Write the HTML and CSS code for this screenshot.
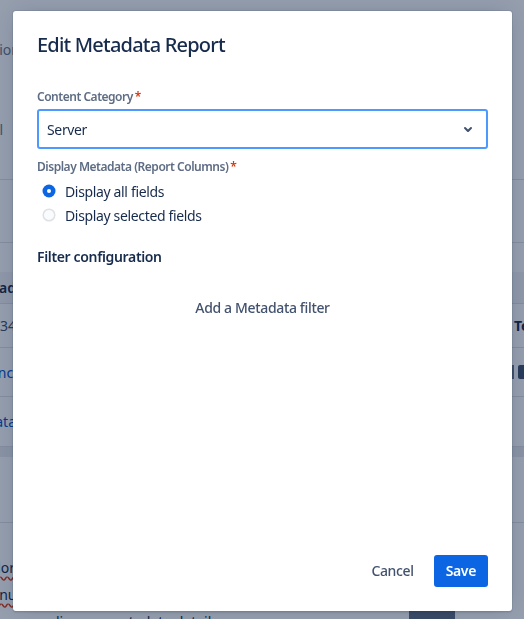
FILE: index.html
```html
<!DOCTYPE html>
<html lang="en">
<head>
    <meta charset="UTF-8">
    <meta name="viewport" content="width=device-width, initial-scale=1.0">
    <title>Edit Metadata Report</title>
    <link rel="stylesheet" href="styles.css">
</head>
<body>
    <div class="page">
        <div class="page-intro">
            <p class="intro-title">Report description</p>
            <p class="intro-meta">Detail</p>
        </div>
        <div class="toolbar"></div>
        <div class="grid">
            <div class="grid-row grid-head">
                <span class="cell cell-a">Upload</span>
                <span class="cell cell-b"></span>
                <span class="cell cell-c"></span>
            </div>
            <div class="grid-row row-1">
                <span class="cell cell-a muted">1234</span>
                <span class="cell cell-b"></span>
                <span class="cell cell-c strong">Template</span>
            </div>
            <div class="grid-row row-2">
                <span class="cell cell-a link cell-wide">Finance</span>
                <span class="cell cell-b"></span>
                <span class="cell cell-c"><span class="pipe"></span><span class="chip"></span></span>
            </div>
            <div class="grid-row row-3">
                <span class="cell cell-a link">Metadata</span>
                <span class="cell cell-b"></span>
                <span class="cell cell-c"></span>
            </div>
        </div>
        <div class="band"></div>
        <div class="notes">
            <p class="note-line"><span class="typo">Vendor</span></p>
            <p class="note-line note-second"><span class="typo">Annual</span></p>
            <div class="note-last">
                <span>lineage metadata details</span>
                <span class="handle"></span>
            </div>
        </div>
    </div>

    <div class="blanket">
        <div class="modal">
            <div class="modal-header">
                <h1>Edit Metadata Report</h1>
            </div>

            <div class="modal-body">
                <label class="field-label">Content Category<span class="required">*</span></label>
                <div class="select">
                    <span class="select-value">Server</span>
                    <svg class="select-icon" width="24" height="24" viewBox="0 0 24 24">
                        <path d="M8.292 10.293a1.009 1.009 0 000 1.419l2.939 2.965c.218.215.5.322.779.322s.556-.107.769-.322l2.93-2.955a1.01 1.01 0 000-1.419.987.987 0 00-1.406 0l-2.298 2.317-2.307-2.327a.99.99 0 00-1.406 0z" fill="currentColor" fill-rule="evenodd"/>
                    </svg>
                </div>

                <label class="field-label">Display Metadata (Report Columns)<span class="required">*</span></label>
                <div class="radio-group">
                    <div class="radio">
                        <svg width="24" height="24" viewBox="0 0 24 24">
                            <circle cx="12" cy="12" r="6.5" fill="#0c66e4"/>
                            <circle cx="12" cy="12" r="2" fill="#ffffff"/>
                        </svg>
                        <span>Display all fields</span>
                    </div>
                    <div class="radio">
                        <svg width="24" height="24" viewBox="0 0 24 24">
                            <circle cx="12" cy="12" r="5.8" fill="#fafbfc" stroke="#dfe1e6" stroke-width="1.5"/>
                        </svg>
                        <span>Display selected fields</span>
                    </div>
                </div>

                <h2 class="section-title">Filter configuration</h2>
                <div class="add-filter">
                    <button class="btn btn-subtle">Add a Metadata filter</button>
                </div>
            </div>

            <div class="modal-footer">
                <button class="btn btn-subtle">Cancel</button>
                <button class="btn btn-primary">Save</button>
            </div>
        </div>
    </div>
</body>
</html>
```

FILE: styles.css
```css
* {
    box-sizing: border-box;
}
html, body {
    height: 100%;
}
body {
    margin: 0;
    overflow: hidden;
    font-family: "Noto Sans", "Liberation Sans", sans-serif;
    font-size: 14px;
    color: #172b4d;
    background-color: #ffffff;
}

/* page behind the dialog */
.page {
    width: 620px;
}
.page-intro {
    height: 180px;
    padding-top: 40px;
    border-bottom: 1px solid #dfe1e6;
}
.intro-title,
.intro-meta {
    margin: 0;
    width: 200px;
    margin-left: -180px;
    text-align: right;
    line-height: 20px;
    color: #6b778c;
}
.intro-meta {
    margin-top: 60px;
    margin-left: -197px;
}
.toolbar {
    height: 63px;
    border-bottom: 1px solid #dfe1e6;
}
.grid {
    padding-top: 29px;
}
.grid-row {
    display: flex;
    align-items: center;
    border-bottom: 1px solid #dfe1e6;
}
.grid-head {
    height: 32px;
    background-color: #f4f5f7;
    font-weight: 600;
}
.row-1 { height: 44px; }
.row-2 { height: 49px; }
.row-3 { height: 50px; }
.cell-a {
    width: 80px;
    margin-left: -64px;
    text-align: right;
    flex: none;
}
.cell-wide {
    margin-left: -59px;
}
.cell-wide + .cell-b {
    width: 491px;
}
.cell-b {
    width: 498px;
    flex: none;
}
.cell-c {
    display: flex;
    align-items: center;
    gap: 4px;
}
.muted { color: #42526e; }
.link { color: #0052cc; }
.strong { font-weight: 700; }
.pipe {
    width: 2px;
    height: 14px;
    background-color: #6b778c;
}
.chip {
    width: 14px;
    height: 14px;
    background-color: #42526e;
    border-radius: 2px;
}
.band {
    height: 10px;
    background-color: #ebecf0;
}
.notes {
    border-top: 1px solid #ffffff;
    padding-top: 96px;
}
.notes::before {
    content: "";
    display: block;
    border-top: 1px solid #dfe1e6;
    margin-top: -32px;
    margin-bottom: 31px;
}
.note-line {
    margin: 0;
    width: 80px;
    margin-left: -65px;
    text-align: right;
    line-height: 27px;
    color: #172b4d;
}
.note-second {
    margin-left: -52px;
}
.typo {
    text-decoration: underline wavy #de350b;
    text-underline-offset: 3px;
}
.note-last {
    display: flex;
    align-items: center;
    padding-left: 56px;
    line-height: 27px;
    width: 524px;
}
.handle {
    margin-left: auto;
    margin-right: 69px;
    width: 46px;
    height: 24px;
    background-color: #5e6c84;
}

/* dialog */
.blanket {
    position: fixed;
    inset: 0;
    display: flex;
    align-items: flex-start;
    padding: 11px 0 0 13px;
    background-color: rgba(9, 30, 66, 0.43);
}
.modal {
    display: flex;
    flex-direction: column;
    width: 499px;
    height: 600px;
    background-color: #ffffff;
    border-radius: 3px;
    letter-spacing: -0.025em;
    box-shadow: 0 0 0 1px rgba(9, 30, 66, 0.08), 0 2px 1px rgba(9, 30, 66, 0.08), 0 0 20px -6px rgba(9, 30, 66, 0.31);
}
.modal-header {
    padding: 22px 24px 22px;
}
.modal-header h1 {
    margin: 0;
    font-size: 20px;
    font-weight: 500;
    line-height: 24px;
    letter-spacing: -0.04em;
    color: #172b4d;
}
.modal-body {
    flex: 1;
    padding: 0 24px;
}
.field-label {
    display: block;
    margin-top: 10px;
    margin-bottom: 4px;
    font-size: 12px;
    font-weight: 600;
    line-height: 16px;
    letter-spacing: -0.04em;
    color: #5e6c84;
}
.required {
    margin-left: 2px;
    color: #de350b;
}
.select {
    display: flex;
    align-items: center;
    height: 40px;
    padding: 0 6px 0 8px;
    border: 2px solid #4c9aff;
    border-radius: 3px;
    background-color: #ffffff;
}
.select-value {
    flex: 1;
    color: #172b4d;
}
.select-icon {
    color: #42526e;
}
.radio-group {
    margin-top: 4px;
}
.radio {
    display: flex;
    align-items: center;
    gap: 4px;
    height: 24px;
    color: #172b4d;
}
.section-title {
    margin: 20px 0 0;
    font-size: 14px;
    font-weight: 600;
    line-height: 20px;
    color: #172b4d;
}
.add-filter {
    display: flex;
    justify-content: center;
    margin-top: 25px;
}
.btn {
    height: 32px;
    padding: 0 12px;
    border: none;
    border-radius: 3px;
    font-family: inherit;
    font-size: 14px;
    font-weight: 500;
    letter-spacing: inherit;
    line-height: 32px;
    cursor: pointer;
}
.btn-subtle {
    background: none;
    color: #42526e;
}
.btn-primary {
    background-color: #0c66e4;
    color: #ffffff;
    font-weight: 600;
}
.modal-footer {
    display: flex;
    justify-content: flex-end;
    gap: 8px;
    padding: 22px 24px 24px;
}
```
